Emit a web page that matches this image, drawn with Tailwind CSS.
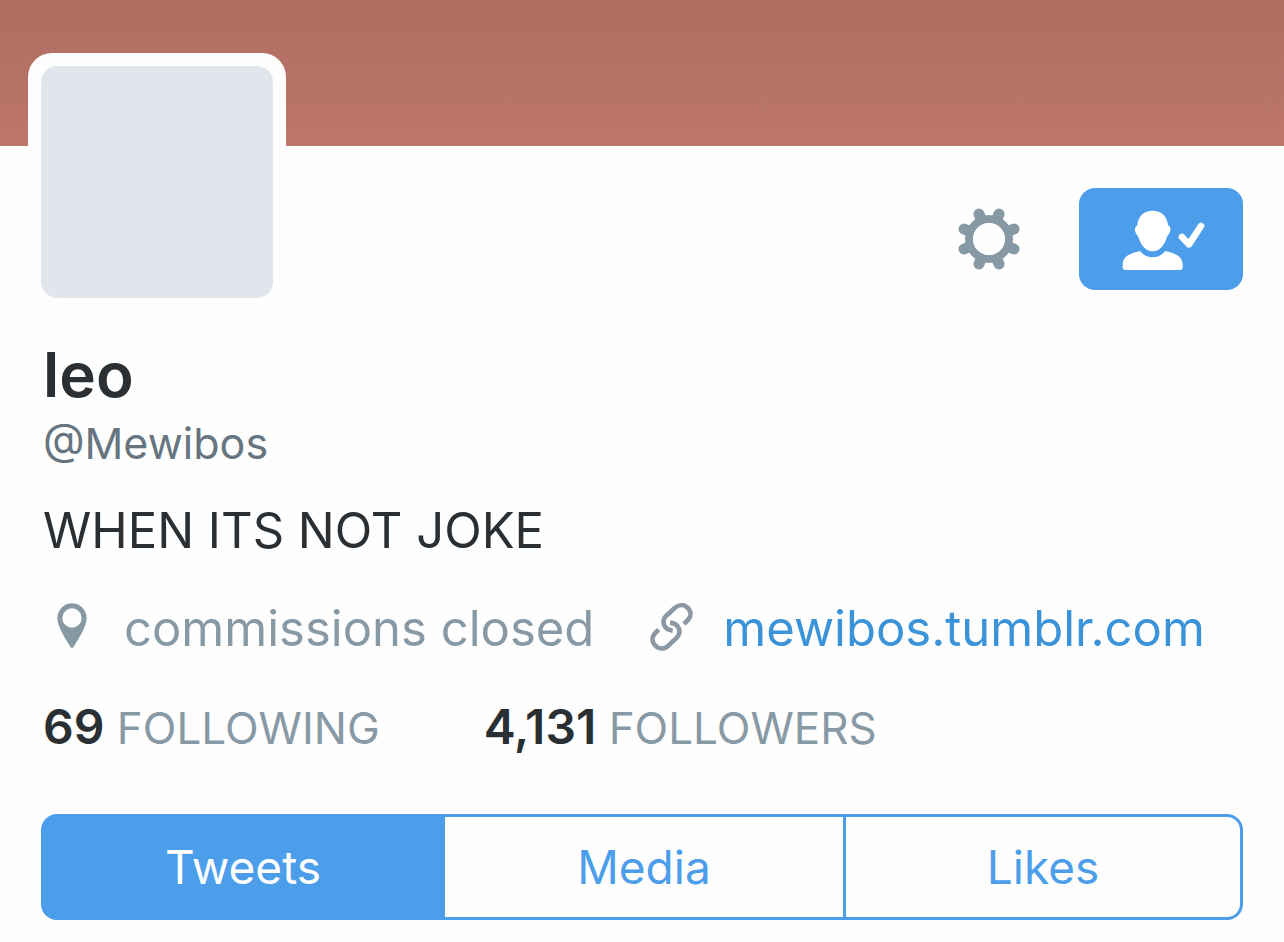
<!DOCTYPE html>
<html lang="en">
<head>
    <meta charset="UTF-8">
    <meta name="viewport" content="width=device-width, initial-scale=1.0">
    <title>leo (@Mewibos)</title>
    <script src="https://cdn.jsdelivr.net/npm/@tailwindcss/browser@4"></script>
</head>
<body class="bg-[#fefefe] font-['Inter',sans-serif] text-[#292f33]">
    <!-- Banner -->
    <header class="h-[146px] bg-linear-to-b from-[#ae6d60] to-[#bd766b]"></header>

    <main class="px-[41px] pb-5">
        <!-- Avatar and actions -->
        <div class="flex justify-between items-start">
            <div class="-mt-[93px] -ml-[13px] p-[13px] bg-[#fefefe] rounded-3xl">
                <div class="size-[232px] rounded-2xl bg-[#e1e6ed]"></div>
            </div>
            <div class="flex items-center gap-[58px] pt-[42px]">
                <button type="button" aria-label="Settings">
                    <svg class="size-16" viewBox="-32 -32 64 64" fill="none" stroke="#8899a6">
                        <circle r="20" stroke-width="8"/>
                        <path stroke-width="11" stroke-linecap="round" d="M8 -20L10 -25M20 -8L25 -10M20 8L25 10M8 20L10 25M-8 20L-10 25M-20 8L-25 10M-20 -8L-25 -10M-8 -20L-10 -25"/>
                        <circle r="16" fill="#fefefe" stroke="none"/>
                    </svg>
                </button>
                <button type="button" aria-label="Following" class="flex items-center justify-center w-[164px] h-[102px] rounded-2xl bg-[#4c9eeb]">
                    <svg class="w-[88px] h-16" viewBox="-9 -3 264 192" fill="#fff">
                        <path d="M98 8C124 8 142 24 144 52C152 54 154 68 147 78C143 83 141 86 140 90C133 110 120 130 98 130C76 130 63 110 56 90C55 86 53 83 49 78C42 68 45 54 52 52C54 24 72 8 98 8Z"/>
                        <path d="M60 129C70 141 83 148 98 148C113 148 126 141 136 129C164 136 188 144 188 170V178Q188 186 180 186H16Q8 186 8 178V170C8 144 32 136 60 129Z"/>
                        <path d="M186 87L207 109L243 54" fill="none" stroke="#fff" stroke-width="20" stroke-linecap="round" stroke-linejoin="round"/>
                    </svg>
                </button>
            </div>
        </div>

        <div class="pl-[2px]">
            <!-- Name and bio -->
            <h1 class="mt-8 text-[62px] leading-[64px] font-semibold">leo</h1>
            <p class="mt-[10px] text-[43px] leading-[52px] text-[#66757f]">@Mewibos</p>
            <p class="mt-8 text-[49px] leading-[60px]">WHEN ITS NOT JOKE</p>

            <!-- Location and website -->
            <div class="mt-[38px] pl-[13px] flex items-center text-[49px] leading-[60px] whitespace-nowrap">
                <svg class="w-8 h-14 shrink-0" viewBox="0 0 96 168" fill="#8899a6">
                    <path fill-rule="evenodd" d="M48 7A44 44 0 0 1 92 51C92 78 68 112 53 137Q48 144 43 137C28 112 4 78 4 51A44 44 0 0 1 48 7ZM48 22A29 29 0 1 0 48 80A29 29 0 1 0 48 22Z"/>
                </svg>
                <span class="ml-9 text-[#8899a6]">commissions closed</span>
                <svg class="ml-[53px] w-12 h-14 shrink-0" viewBox="51 36 144 168" fill="none" stroke="#8c98a3" stroke-width="14">
                    <path d="M128 125C100 122 93 96 109 80L134 57C146 46 162 46 173 56C184 67 184 82 174 93L162 105"/>
                    <path d="M120 101C147 103 156 129 141 145L115 170C103 181 87 181 76 170C65 159 65 145 74 134L86 122"/>
                </svg>
                <a href="#" class="ml-7 text-[#3b94d9]">mewibos.tumblr.com</a>
            </div>

            <!-- Counts -->
            <div class="mt-[38px] flex items-baseline gap-[104px] text-[44px] leading-[60px] whitespace-nowrap text-[#8899a6]">
                <a href="#"><span class="text-[48px] font-semibold text-[#292f33]">69</span> FOLLOWING</a>
                <a href="#"><span class="text-[48px] font-semibold text-[#292f33]">4,131</span> FOLLOWERS</a>
            </div>
        </div>

        <!-- Tabs -->
        <nav class="mt-14 grid grid-cols-[401fr_401fr_394fr] h-[106px] rounded-2xl border-3 border-[#4c9eeb] bg-linear-to-r from-[#4c9eeb] from-10% to-transparent to-10% overflow-hidden divide-x-3 divide-[#4c9eeb] text-[46px] text-[#4c9eeb]">
            <button type="button" class="bg-[#4c9eeb] text-white">Tweets</button>
            <button type="button">Media</button>
            <button type="button">Likes</button>
        </nav>
    </main>
</body>
</html>
